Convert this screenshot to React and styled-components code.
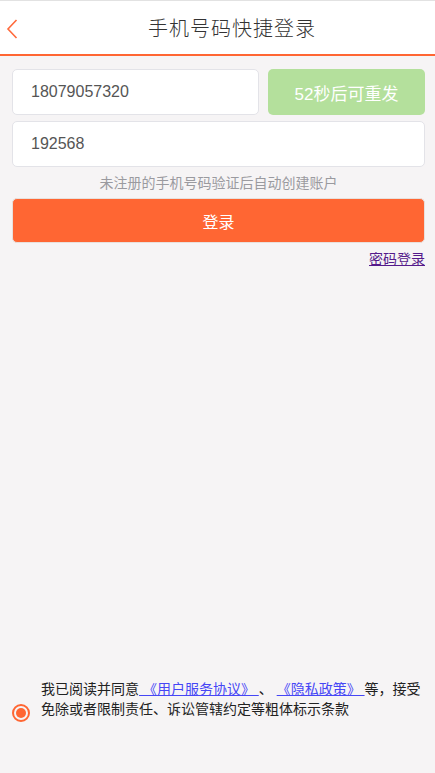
import React, { useState } from 'react';
import styled, { createGlobalStyle } from 'styled-components';

const GlobalStyle = createGlobalStyle`
  html, body {
    margin: 0;
    padding: 0;
    background: #f6f4f5;
    font-family: "Liberation Sans", "Noto Sans CJK SC", sans-serif;
  }
`;

const Page = styled.div`
  min-height: 773px;
  display: flex;
  flex-direction: column;
  box-sizing: border-box;
  border-top: 1px solid #e2e2e2;
`;

const Header = styled.header`
  position: relative;
  height: 53px;
  padding-left: 29px;
  background: #fff;
  border-bottom: 2px solid #ff6633;
  display: flex;
  align-items: center;
  justify-content: center;
`;

const BackButton = styled.button`
  position: absolute;
  left: 4px;
  top: 16px;
  width: 16px;
  height: 24px;
  padding: 0;
  border: none;
  background: none;
  display: flex;
  align-items: center;
  justify-content: center;
`;

const Title = styled.h1`
  margin: 0;
  font-family: "Noto Sans CJK SC", sans-serif;
  font-weight: 300;
  font-size: 20px;
  letter-spacing: 1px;
  color: #333;
`;

const Form = styled.div`
  padding: 13px 10px 0 12px;
  display: flex;
  flex-direction: column;
`;

const Row = styled.div`
  display: flex;
  gap: 9px;
  margin-bottom: 6px;
`;

const Input = styled.input`
  flex: 1;
  min-width: 0;
  height: 46px;
  box-sizing: border-box;
  border: 1px solid #e3e3e8;
  border-radius: 5px;
  background: #fff;
  padding: 0 18px;
  font-family: "Liberation Sans", sans-serif;
  font-size: 16px;
  color: #555;
  outline: none;
`;

const ResendButton = styled.button`
  width: 157px;
  height: 46px;
  border: none;
  border-radius: 5px;
  background: #b4e09c;
  color: #fff;
  font-family: "Liberation Sans", "Noto Sans CJK SC", sans-serif;
  font-size: 17px;
  padding: 0;
`;

const Hint = styled.p`
  margin: 0 0 5px;
  text-align: center;
  font-size: 14px;
  color: #9a9a9f;
  line-height: 20px;
`;

const LoginButton = styled.button`
  height: 45px;
  border: 1px solid #e8e0dc;
  border-radius: 5px;
  background: #ff6633;
  color: #fff;
  font-family: "Noto Sans CJK SC", sans-serif;
  font-size: 16px;
  padding: 0;
`;

const LinkRow = styled.div`
  display: flex;
  justify-content: flex-end;
  margin-top: 6px;
`;

const TextLink = styled.a`
  font-size: 14px;
  line-height: 20px;
  color: #551a8b;
  text-decoration: underline;
`;

const Spacer = styled.div`
  flex: 1;
`;

const Agreement = styled.div`
  display: flex;
  align-items: flex-start;
  padding: 0 8px 51px 12px;
  gap: 11px;
`;

const Radio = styled.span`
  flex: none;
  width: 18px;
  height: 18px;
  margin-top: 25px;
  box-sizing: border-box;
  border: 2px solid #ff6633;
  border-radius: 50%;
  display: flex;
  align-items: center;
  justify-content: center;

  &::after {
    content: '';
    width: 10px;
    height: 10px;
    border-radius: 50%;
    background: #ff6633;
  }
`;

const AgreementText = styled.p`
  margin: 0;
  font-size: 14px;
  line-height: 20px;
  color: #222;
`;

const DocLink = styled.a`
  color: #4646f5;
  text-decoration: underline;
`;

export default function App() {
  const [phone, setPhone] = useState('18079057320');
  const [code, setCode] = useState('192568');

  return (
    <>
      <GlobalStyle />
      <Page>
        <Header>
          <BackButton aria-label="back">
            <svg width="12" height="20" viewBox="0 0 12 20">
              <polyline points="10.5,1 2,10 10.5,19" fill="none" stroke="#ff6a3c" strokeWidth="1.6" />
            </svg>
          </BackButton>
          <Title>手机号码快捷登录</Title>
        </Header>
        <Form>
          <Row>
            <Input value={phone} onChange={(e) => setPhone(e.target.value)} />
            <ResendButton>52秒后可重发</ResendButton>
          </Row>
          <Row>
            <Input value={code} onChange={(e) => setCode(e.target.value)} />
          </Row>
          <Hint>未注册的手机号码验证后自动创建账户</Hint>
          <LoginButton>登录</LoginButton>
          <LinkRow>
            <TextLink href="#">密码登录</TextLink>
          </LinkRow>
        </Form>
        <Spacer />
        <Agreement>
          <Radio />
          <AgreementText>
            我已阅读并同意<DocLink href="#"> 《用户服务协议》 </DocLink>、 <DocLink href="#"> 《隐私政策》 </DocLink>等，接受免除或者限制责任、诉讼管辖约定等粗体标示条款
          </AgreementText>
        </Agreement>
      </Page>
    </>
  );
}
